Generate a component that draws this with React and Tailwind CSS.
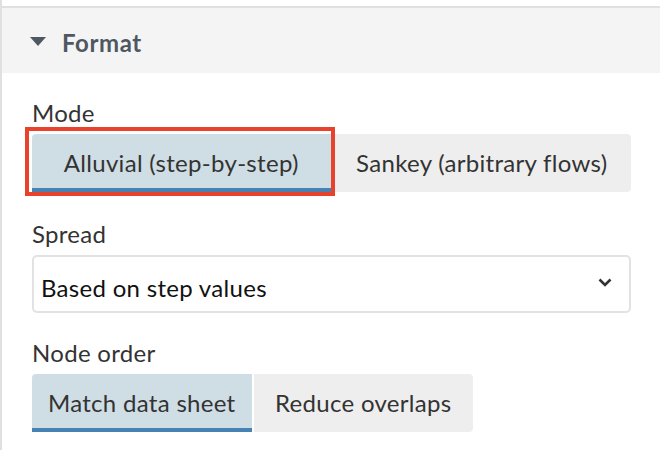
import React from "react";

export default function App() {
  return (
    <div className="w-[660px] h-[450px] bg-white overflow-hidden font-['Lato',sans-serif]">
      <div className="h-full border-l-2 border-[#e0e0e0]">
        <div className="h-[6px]" />
        <div className="h-[67px] border-t-2 border-[#e0e0e0] bg-[#f4f4f4] flex items-start pl-[28px] pt-[21px] text-[#4f5861]">
          <svg width="16" height="9" viewBox="0 0 16 9" className="mt-[8px]">
            <polygon points="0,0 16,0 8,9" fill="#4f5861" />
          </svg>
          <span className="ml-[16px] text-[24px] leading-[28px] font-bold tracking-[0.6px]">Format</span>
        </div>
        <div className="pl-[30px] pr-[29px] pt-[26px] text-[#333] text-[24px] leading-[28px] tracking-[0.3px]">
          <div>Mode</div>
          <div className="relative mt-[7px] grid grid-cols-2 gap-[2px] h-[58px]">
            <div className="bg-[#cfdde5] border-b-4 border-[#4682b4] rounded-tl-[4px] flex justify-center pt-[15px]">
              Alluvial (step-by-step)
            </div>
            <div className="bg-[#eeeeee] rounded-r-[4px] flex justify-center pt-[15px]">
              Sankey (arbitrary flows)
            </div>
            <div className="absolute -left-[7px] -top-[7px] w-[310px] h-[69px] border-4 border-[#e8412c] pointer-events-none" />
          </div>
          <div className="mt-[28px]">Spread</div>
          <div className="mt-[7px] h-[58px] border-2 border-[#e2e2e2] rounded-[5px] flex items-start pt-[17px] pl-[7px] pr-[17px] text-[#111]">
            <span className="flex-1">Based on step values</span>
            <svg width="14" height="9" viewBox="0 0 14 9" className="mt-[4px]">
              <polyline points="1.5,1.5 7,7 12.5,1.5" fill="none" stroke="#333" strokeWidth="2.6" />
            </svg>
          </div>
          <div className="mt-[26px]">Node order</div>
          <div className="mt-[7px] grid grid-cols-2 gap-[2px] w-[441px] h-[58px]">
            <div className="bg-[#cfdde5] border-b-4 border-[#4682b4] rounded-tl-[4px] flex justify-center pt-[15px]">
              Match data sheet
            </div>
            <div className="bg-[#eeeeee] rounded-r-[4px] flex justify-center pt-[15px]">
              Reduce overlaps
            </div>
          </div>
        </div>
      </div>
    </div>
  );
}
